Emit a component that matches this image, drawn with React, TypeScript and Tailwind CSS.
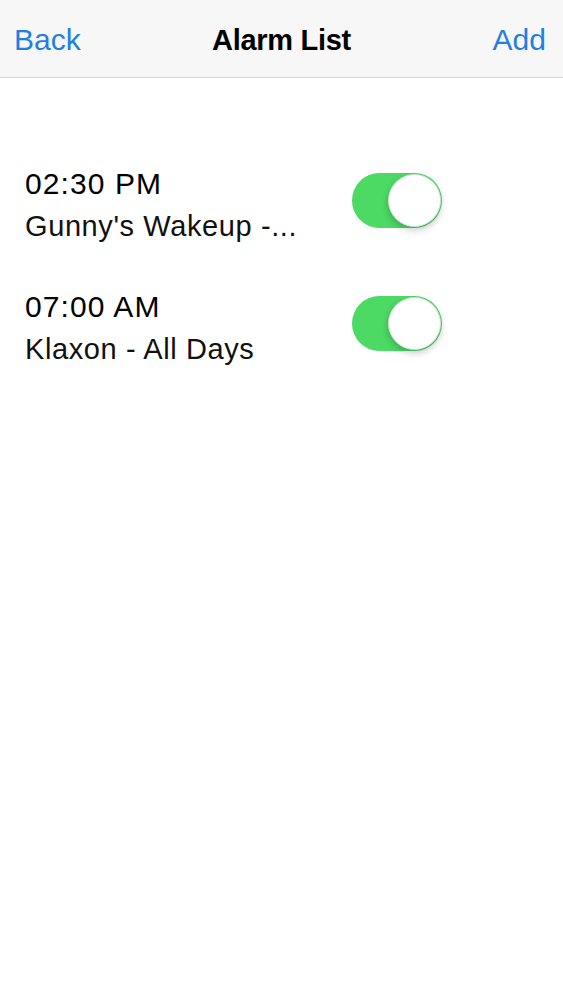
const alarms = [
  { time: "02:30 PM", label: "Gunny's Wakeup -...", on: true },
  { time: "07:00 AM", label: "Klaxon - All Days", on: true },
];

const Toggle = ({ on }: { on: boolean }) => {
  return (
    <div
      className={`flex h-[55px] w-[90px] items-center rounded-full p-[1px] ${
        on ? "justify-end bg-[#4cd964]" : "justify-start bg-[#e5e5ea]"
      }`}
    >
      <div className="h-[53px] w-[53px] rounded-full border border-[#cfe3d3] bg-white shadow-[0_3px_7px_rgba(0,0,0,0.22)]" />
    </div>
  );
};

const AlarmRow = ({ time, label, on }: { time: string; label: string; on: boolean }) => {
  return (
    <div className="flex flex-row items-start">
      <div className="flex w-[327px] flex-col gap-[13px]">
        <p className="text-[30px] leading-[30px] tracking-[1.1px] text-black">{time}</p>
        <p className="text-[29px] leading-[29px] tracking-[0.6px] text-[#111]">{label}</p>
      </div>
      <div className="mt-[4px]">
        <Toggle on={on} />
      </div>
    </div>
  );
};

export default function App() {
  return (
    <div
      className="min-h-[1000px] w-full bg-white"
      style={{ fontFamily: '"Liberation Sans", Arial, sans-serif' }}
    >
      <div className="flex h-[78px] flex-row items-center justify-between border-b-[1.5px] border-[#d4d4d6] bg-[#f7f7f8] px-[14px] pt-[2px]">
        <span className="w-[100px] text-[30px] leading-[30px] text-[#1f7fe3]">Back</span>
        <span className="text-[29px] font-bold leading-[30px] tracking-[-0.3px] text-black">
          Alarm List
        </span>
        <span className="w-[100px] pr-[3px] text-right text-[30px] leading-[30px] text-[#1f7fe3]">
          Add
        </span>
      </div>
      <div className="flex flex-col gap-[51px] pl-[25px] pt-[91px]">
        {alarms.map((a) => (
          <AlarmRow key={a.time} time={a.time} label={a.label} on={a.on} />
        ))}
      </div>
    </div>
  );
}
